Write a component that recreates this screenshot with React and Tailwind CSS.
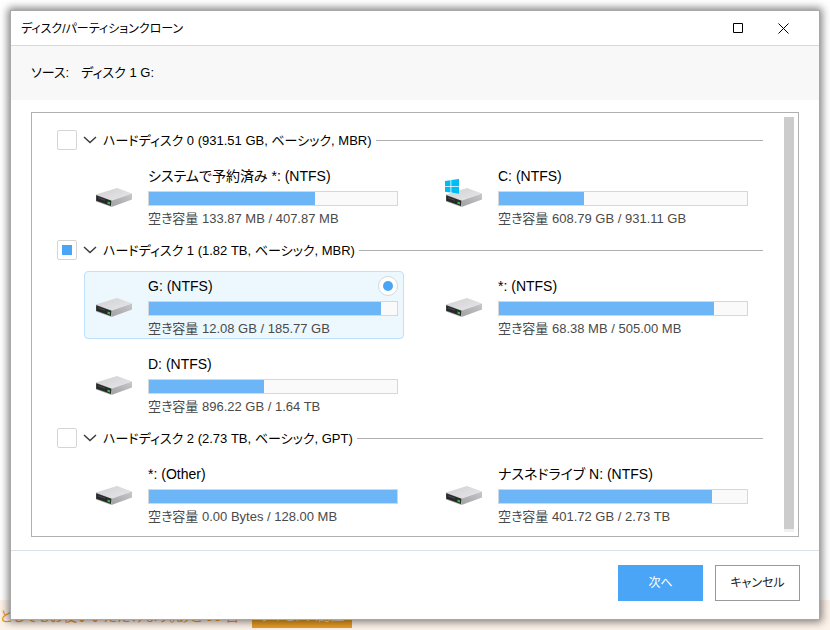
import { useState } from 'react';

const DISKS = [
  {
    id: 0,
    title: 'ハードディスク 0 (931.51 GB, ベーシック, MBR)',
    parts: [
      { id: 'reserved', name: 'システムで予約済み *: (NTFS)', free: '空き容量 133.87 MB / 407.87 MB', used: 67 },
      { id: 'c', name: 'C: (NTFS)', free: '空き容量 608.79 GB / 931.11 GB', used: 34.4, system: true },
    ],
  },
  {
    id: 1,
    title: 'ハードディスク 1 (1.82 TB, ベーシック, MBR)',
    parts: [
      { id: 'g', name: 'G: (NTFS)', free: '空き容量 12.08 GB / 185.77 GB', used: 93.7 },
      { id: 'recovery', name: '*: (NTFS)', free: '空き容量 68.38 MB / 505.00 MB', used: 86.6 },
      { id: 'd', name: 'D: (NTFS)', free: '空き容量 896.22 GB / 1.64 TB', used: 46.3 },
    ],
  },
  {
    id: 2,
    title: 'ハードディスク 2 (2.73 TB, ベーシック, GPT)',
    parts: [
      { id: 'other', name: '*: (Other)', free: '空き容量 0.00 Bytes / 128.00 MB', used: 100 },
      { id: 'n', name: 'ナスネドライブ N: (NTFS)', free: '空き容量 401.72 GB / 2.73 TB', used: 86 },
    ],
  },
];

function DriveIcon({ system }) {
  return (
    <svg width="39" height="30" viewBox="0 0 39 30" aria-hidden="true">
      <defs>
        <linearGradient id="driveTop" x1="0" y1="0" x2="1" y2="1">
          <stop offset="0" stopColor="#d0d0d3" />
          <stop offset="1" stopColor="#e8e8ea" />
        </linearGradient>
        <linearGradient id="driveSide" x1="0" y1="1" x2="1" y2="0">
          <stop offset="0" stopColor="#a2a2a5" />
          <stop offset="1" stopColor="#c8c8cb" />
        </linearGradient>
      </defs>
      <path d="M2 16.5 L23 10 L38 15.5 L18 22.5 Z" fill="url(#driveTop)" />
      <path d="M18 22.5 L38 15.5 V21.5 L17.5 29 Z" fill="url(#driveSide)" />
      <path d="M2 16.5 L18 22.5 L17.5 29 L2 23.5 Z" fill="#a9a9ab" />
      <path d="M2.2 17.3 L17.3 22.8 L17 28 L2.2 22.8 Z" fill="#262829" />
      <path d="M4 19.8 L11 22.3" stroke="#4a4d4f" strokeWidth="1" />
      <path d="M13.5 23.5 L16 24.3 V26.5 L13.5 25.7 Z" fill="#25c32b" />
      {system && (
        <g fill="#00bcf2">
          <path d="M1 3 L6.5 2.2 V8 H1 Z" />
          <path d="M7.3 2.1 L15 1 V8 H7.3 Z" />
          <path d="M1 8.8 H6.5 V14.5 L1 13.8 Z" />
          <path d="M7.3 8.8 H15 V15.7 L7.3 14.6 Z" />
        </g>
      )}
    </svg>
  );
}

function Partition({ part, selected, onSelect }) {
  return (
    <label
      className={`flex rounded border pt-1 pr-[5px] pl-[9px] ${
        selected ? 'border-[#bfe1fb] bg-[#ecf7fe]' : 'border-transparent'
      }`}
    >
      <span className="mt-3 w-[54px] shrink-0">
        <DriveIcon system={part.system} />
      </span>
      <span className="min-w-0 flex-1">
        <span className="flex h-5 items-center justify-between">
          <span className="text-sm leading-5 whitespace-nowrap">{part.name}</span>
          <input
            type="radio"
            name="partition"
            checked={selected}
            onChange={onSelect}
            className="grid size-5 appearance-none place-items-center rounded-full border border-[#d5d8dc] bg-white opacity-0 before:size-[10px] before:rounded-full before:bg-[#4aa5f6] checked:opacity-100"
          />
        </span>
        <span className="mt-[5px] block h-[15px] border border-[#d3d8de] bg-[#fafafa]">
          <span className="block h-full bg-[#6cb6f7]" style={{ width: `${part.used}%` }} />
        </span>
        <span className="mt-1 block text-[13px] leading-[18px] whitespace-nowrap text-[#4a4a4a]">
          {part.free}
        </span>
      </span>
    </label>
  );
}

function Disk({ disk, selected, onSelect }) {
  const [open, setOpen] = useState(true);
  const active = disk.parts.some((p) => p.id === selected);

  return (
    <section>
      <div className="flex h-5 items-center">
        <input
          type="checkbox"
          aria-label={disk.title}
          checked={active}
          onChange={() => onSelect(active ? null : disk.parts[0].id)}
          className="grid size-5 shrink-0 appearance-none place-items-center rounded-[2px] border border-[#d5d5d5] bg-white checked:before:size-[10px] checked:before:bg-[#4aa5f6]"
        />
        <button
          type="button"
          aria-label={disk.title}
          aria-expanded={open}
          onClick={() => setOpen(!open)}
          className="flex w-[26px] shrink-0 justify-center"
        >
          <svg width="14" height="8" viewBox="0 0 14 8" fill="none" stroke="#3c3c3c" strokeWidth="1.5" aria-hidden="true">
            <path d="M1 1 L7 6.5 L13 1" />
          </svg>
        </button>
        <h2 className="pt-0.5 text-[13px] leading-5 whitespace-nowrap">{disk.title}</h2>
        <span className="ml-1 h-px flex-1 bg-[#b0b0b0]" />
      </div>
      {open && (
        <div className="mt-[11px] mr-[9px] ml-[27px] grid grid-cols-2 gap-x-[30px] gap-y-[10px]">
          {disk.parts.map((part) => (
            <Partition
              key={part.id}
              part={part}
              selected={part.id === selected}
              onSelect={() => onSelect(part.id)}
            />
          ))}
        </div>
      )}
    </section>
  );
}

export default function App() {
  const [selected, setSelected] = useState('g');

  return (
    <div className="relative flex min-h-screen flex-col bg-white p-[10px] font-['Liberation_Sans','Noto_Sans_CJK_JP',sans-serif] text-black [font-feature-settings:'palt']">
      <div className="absolute inset-x-0 bottom-0 flex h-[30px] items-start bg-[#fef3ea] text-sm text-[#ef9a24]">
        <span className="w-[252px] pt-1 leading-6 whitespace-nowrap">
          どしてもお使いいただけます。あと 90 日
        </span>
        <button type="button" className="h-7 w-[100px] bg-[#e79c24] pt-1 text-[13px] leading-6 text-[#fbe3bd]">
          ライセンス認証
        </button>
      </div>

      <main className="relative flex flex-1 flex-col border border-[#a8a8a8] bg-white shadow-[0_0_8px_2px_rgba(0,0,0,0.5)]">
        <header className="flex h-[35px] items-center border-b border-[#d9d9d9] pr-[30px] pl-[10px]">
          <h1 className="flex-1 pt-0.5 text-xs leading-5">ディスク/パーティションクローン</h1>
          <button type="button" aria-label="最大化" className="mr-[34px]">
            <svg width="11" height="11" viewBox="0 0 11 11" fill="none" stroke="#000" aria-hidden="true">
              <path d="M0.5 0.5 H9.5 V9.5 H0.5 Z" />
            </svg>
          </button>
          <button type="button" aria-label="閉じる">
            <svg width="11" height="11" viewBox="0 0 11 11" fill="none" stroke="#000" aria-hidden="true">
              <path d="M0.5 0.5 L10.5 10.5 M10.5 0.5 L0.5 10.5" />
            </svg>
          </button>
        </header>

        <div className="flex h-[54px] items-center gap-3 bg-[#f8f8f8] px-5 text-[13px] leading-5">
          <span>ソース:</span>
          <span>ディスク 1 G:</span>
        </div>

        <div className="mx-5 mt-3 mb-[13px] flex border border-[#b0b0b0] pt-1 pr-1 pb-1 pl-[25px]">
          <div className="flex flex-1 flex-col gap-[11px] pt-[13px] pb-[5px]">
            {DISKS.map((disk) => (
              <Disk key={disk.id} disk={disk} selected={selected} onSelect={setSelected} />
            ))}
          </div>
          <div className="ml-[21px] w-[10px] bg-[#f0f0f0] pb-[3px]">
            <div className="h-full bg-[#cccccc]" />
          </div>
        </div>

        <footer className="flex flex-1 items-start justify-end gap-3 border-t border-[#dce1e6] px-[19px] pt-[14px]">
          <button type="button" className="h-9 w-[85px] bg-[#4aa5f6] text-xs text-white">
            次へ
          </button>
          <button type="button" className="h-9 w-[85px] border border-[#999999] bg-white text-xs text-[#222222]">
            キャンセル
          </button>
        </footer>
      </main>
    </div>
  );
}
